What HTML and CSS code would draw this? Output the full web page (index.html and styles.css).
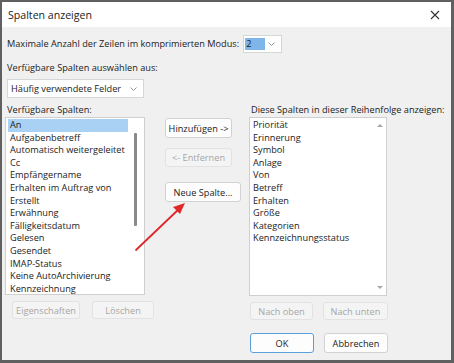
FILE: index.html
```html
<!DOCTYPE html>
<html lang="de">
<head>
<meta charset="utf-8">
<title>Spalten anzeigen</title>
<link rel="stylesheet" href="styles.css">
</head>
<body>
<div class="dialog">
  <div class="titlebar">
    <span class="title">Spalten anzeigen</span>
    <svg class="close" width="10" height="10" viewBox="0 0 10 10"><path d="M1 1 L9 9 M9 1 L1 9" stroke="#333" stroke-width="1.1" fill="none"/></svg>
  </div>
  <div class="content">
    <div class="row1">
      <span class="lbl">Maximale Anzahl der Zeilen im komprimierten Modus:</span>
      <div class="select small">
        <span class="sel-val">2</span>
        <svg class="chev" width="7" height="4" viewBox="0 0 7 4"><polyline points="0.5,0.5 3.5,3.5 6.5,0.5" stroke="#888" stroke-width="0.9" fill="none"/></svg>
      </div>
    </div>
    <div class="lbl row2">Verfügbare Spalten auswählen aus:</div>
    <div class="select wide">
      <span class="sel-text">Häufig verwendete Felder</span>
      <svg class="chev" width="7" height="4" viewBox="0 0 7 4"><polyline points="0.5,0.5 3.5,3.5 6.5,0.5" stroke="#888" stroke-width="0.9" fill="none"/></svg>
    </div>
    <div class="main">
      <div class="col left">
        <div class="lbl head">Verfügbare Spalten:</div>
        <div class="list list-left">
          <div class="items items-left">
            <div class="item sel">An</div>
            <div class="item">Aufgabenbetreff</div>
            <div class="item">Automatisch weitergeleitet</div>
            <div class="item">Cc</div>
            <div class="item">Empfängername</div>
            <div class="item">Erhalten im Auftrag von</div>
            <div class="item">Erstellt</div>
            <div class="item">Erwähnung</div>
            <div class="item">Fälligkeitsdatum</div>
            <div class="item">Gelesen</div>
            <div class="item">Gesendet</div>
            <div class="item">IMAP-Status</div>
            <div class="item">Keine AutoArchivierung</div>
            <div class="item">Kennzeichnung</div>
          </div>
          <div class="vscroll"><div class="thumb"></div></div>
        </div>
        <div class="btnrow leftbtns">
          <div class="btn dis w68">Eigenschaften</div>
          <div class="btn dis w62">Löschen</div>
        </div>
      </div>
      <div class="col mid">
        <div class="btn en w67 h20">Hinzufügen -&gt;</div>
        <div class="btn dis w67 h19 mt10">&lt;- Entfernen</div>
        <div class="btn en w76 h20 mt15">Neue Spalte...</div>
      </div>
      <div class="col right">
        <div class="lbl head">Diese Spalten in dieser Reihenfolge anzeigen:</div>
        <div class="list list-right">
          <div class="items items-right">
            <div class="item">Priorität</div>
            <div class="item">Erinnerung</div>
            <div class="item">Symbol</div>
            <div class="item">Anlage</div>
            <div class="item">Von</div>
            <div class="item">Betreff</div>
            <div class="item">Erhalten</div>
            <div class="item">Größe</div>
            <div class="item">Kategorien</div>
            <div class="item">Kennzeichnungsstatus</div>
          </div>
          <div class="arrows">
            <span class="tri up"></span>
            <span class="tri down"></span>
          </div>
        </div>
        <div class="btnrow rightbtns">
          <div class="btn dis w63">Nach oben</div>
          <div class="btn dis w65">Nach unten</div>
        </div>
        <div class="btnrow okrow">
          <div class="btn en ok w64 h20">OK</div>
          <div class="btn en w64 h20">Abbrechen</div>
        </div>
      </div>
    </div>
  </div>
  <svg class="redarrow" width="454" height="363" viewBox="0 0 454 363">
    <line x1="136" y1="250" x2="180" y2="208" stroke="#e0282a" stroke-width="1.8" stroke-linecap="round"/>
    <polygon points="185,203 173,207 180,214" fill="#e0282a"/>
  </svg>
</div>
</body>
</html>
```

FILE: styles.css
```css
* { box-sizing: border-box; }
html, body { margin: 0; padding: 0; }
body {
  width: 454px;
  height: 363px;
  overflow: hidden;
  font-family: "Open Sans", "Noto Sans", sans-serif;
  font-size: 9.2px;
  color: #222;
  background: #f0f0f0;
}
.dialog {
  position: relative;
  width: 454px;
  height: 363px;
  border-style: solid;
  border-color: #606060;
  border-width: 2px 3px 3px 2px;
  background: #f0f0f0;
}
.titlebar {
  height: 25px;
  background: #fff;
  display: flex;
  align-items: center;
  justify-content: space-between;
  padding: 0 11px 0 6px;
}
.title { font-size: 10.6px; color: #222; }
.content { padding-left: 3px; }
.lbl { line-height: 14px; padding-left: 2px; white-space: nowrap; }
.row1 {
  display: flex;
  align-items: center;
  margin-top: 8px;
  height: 18px;
}
.select {
  display: flex;
  align-items: center;
  justify-content: space-between;
  background: #fff;
  border: 1px solid #d6d6d6;
  height: 18px;
}
.select.small { width: 39px; margin-left: 4px; padding: 0 6px 0 1px; }
.sel-val {
  background: #7fb6ea;
  width: 20px;
  height: 12px;
  line-height: 12px;
  padding-left: 1px;
}
.row2 { margin-top: 8px; }
.select.wide {
  width: 137px;
  height: 19px;
  margin: 4px 0 0 2px;
  padding: 0 6px 0 3px;
}
.main {
  display: flex;
  margin-top: 4px;
}
.col { display: flex; flex-direction: column; }
.left { width: 140px; }
.mid { width: 76px; margin-left: 20px; padding-top: 16px; }
.right { width: 140px; margin-left: 8px; }
.head { height: 15px; line-height: 15px; }
.list {
  background: #fff;
  border: 1px solid #cfcfcf;
  display: flex;
}
.list-left { height: 178px; width: 140px; padding: 1px 0 0 2px; }
.list-right { height: 179px; width: 138px; padding: 1px 0 0 3px; }
.items-left { width: 120px; }
.items-right { flex: 1; }
.item {
  height: 12.6px;
  line-height: 12.6px;
  padding-left: 2px;
  white-space: nowrap;
}
.items-right .item { padding-left: 0; }
.item.sel { background: #a9d1f3; }
.vscroll { margin-left: 6px; padding-top: 14px; }
.thumb { width: 3px; height: 93px; background: #8a8a8a; border-radius: 1px; }
.arrows {
  width: 12px;
  display: flex;
  flex-direction: column;
  justify-content: space-between;
  align-items: center;
  padding: 5px 0 6px;
}
.tri { width: 0; height: 0; border-left: 3px solid transparent; border-right: 3px solid transparent; }
.tri.up { border-bottom: 3.5px solid #a8a8a8; }
.tri.down { border-top: 3.5px solid #a8a8a8; }
.btnrow { display: flex; }
.leftbtns { margin-top: 6px; padding-left: 7px; gap: 12px; }
.rightbtns { margin-top: 6px; padding-left: 1px; gap: 10px; }
.okrow { margin-top: 13px; padding-left: 1px; gap: 10px; }
.btn {
  height: 18px;
  display: flex;
  align-items: center;
  justify-content: center;
  border-radius: 3px;
  white-space: nowrap;
  flex: none;
}
.btn.en { background: #fdfdfd; border: 1px solid #d2d2d2; color: #222; }
.btn.dis { background: #f4f4f4; border: 1px solid #e2e2e2; color: #a6a6a6; }
.btn.ok { border: 1.5px solid #5d9fdb; }
.w62 { width: 62px; }
.w63 { width: 63px; }
.w64 { width: 64px; }
.w65 { width: 65px; }
.w67 { width: 67px; }
.w68 { width: 68px; }
.w76 { width: 76px; }
.h19 { height: 19px; }
.h20 { height: 20px; }
.mt10 { margin-top: 10px; }
.mt15 { margin-top: 15px; }
.redarrow { position: absolute; left: -2px; top: -2px; pointer-events: none; }
```
